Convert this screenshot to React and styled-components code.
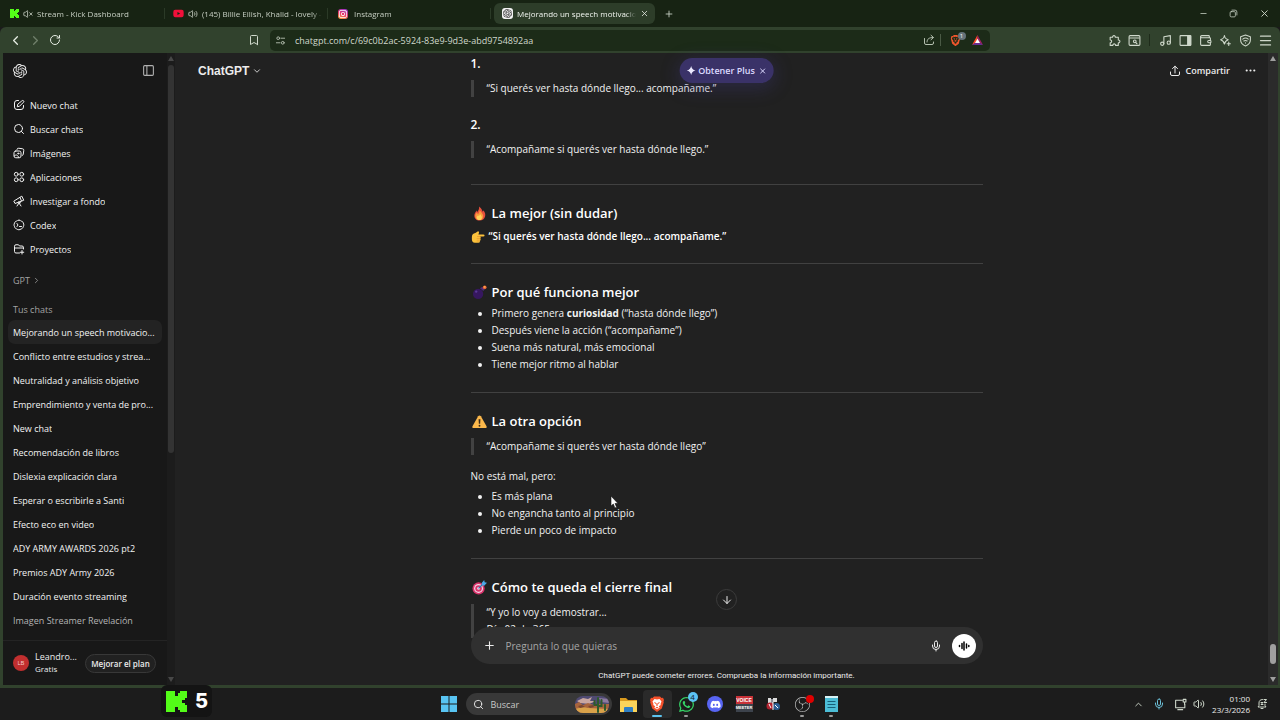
import React from "react";
import styled, { createGlobalStyle, css } from "styled-components";
import {
  ArrowDown, Bookmark, ChevronDown, ChevronLeft, ChevronRight, ChevronUp,
  Ellipsis, Menu, Mic, Minus, Music, PanelLeft, Plus, RotateCw,
  Search, Volume2, VolumeX, Wallet, X,
} from "lucide-react";
import { SiOpenai, SiBrave, SiObsstudio, SiInstagram } from "react-icons/si";
import { FaDiscord, FaWhatsapp, FaYoutube } from "react-icons/fa";

const Global = createGlobalStyle`
  * { box-sizing: border-box; }
  body { margin: 0; background: #1b1b1b; font-family: "Open Sans", "Noto Sans", sans-serif; color: #ececec; }
  button, input { font: inherit; color: inherit; background: none; border: 0; padding: 0; margin: 0; }
  button { display: flex; align-items: center; justify-content: center; white-space: nowrap; }
  input { outline: 0; }
  a { color: inherit; text-decoration: none; }
  ul, h2, h3, p, blockquote { margin: 0; padding: 0; }
  svg { flex: none; display: block; }
`;

const Shell = styled.div`
  position: relative;
  display: flex;
  flex-direction: column;
  height: 100vh;
  overflow: hidden;
`;

/* Browser chrome */
const TabStrip = styled.header`
  display: flex;
  align-items: center;
  height: 27px;
  flex: none;
  padding-left: 2px;
  background: #172313;
`;
const Tab = styled.a`
  display: flex;
  align-items: center;
  gap: 4px;
  width: ${(p) => (p.$active ? 161 : 163)}px;
  height: 21px;
  padding: 0 6px 0 8px;
  font-size: 8px;
  color: #c6cec2;
  ${(p) =>
    p.$active
      ? css`
          margin-left: 3px;
          border-radius: 6px;
          background: #2d3d29;
          color: #f0f4ee;
        `
      : css`
          background: linear-gradient(#2b3a27, #2b3a27) right center / 1px 11px no-repeat;
        `}
`;
const TabTitle = styled.span`
  flex: 1;
  overflow: hidden;
  white-space: nowrap;
  mask-image: linear-gradient(90deg, #000 calc(100% - 10px), transparent);
`;
const IconButton = styled.button`
  width: ${(p) => p.$w || 20}px;
  height: ${(p) => p.$h || 20}px;
  color: ${(p) => p.$color || "#cfd8cb"};
`;
const TabClose = styled(IconButton)`
  width: 9px;
  color: #f0f4ee;
`;
const WindowControls = styled.div`
  display: flex;
  margin-left: auto;
`;
const Toolbar = styled.div`
  display: grid;
  grid-template-columns: 270px minmax(0, 1fr) 290px;
  align-items: center;
  height: 26px;
  flex: none;
  border-radius: 6px 6px 0 0;
  background: #31422d;
`;
const ToolGroup = styled.div`
  display: flex;
  align-items: center;
  padding: 0 5px;
  ${(p) => p.$end && "justify-content: flex-end;"}
`;
const Spacer = styled.span`
  flex: 1;
`;
const Divider = styled.span`
  width: 1px;
  height: 12px;
  margin: 0 ${(p) => p.$m || 0}px;
  background: ${(p) => p.$color || "#1e2b1a"};
`;
const AddressBar = styled.form`
  display: flex;
  align-items: center;
  height: 21px;
  padding: 0 0 0 5px;
  border-radius: 5px;
  background: #1c2b18;
  color: #b5c0b0;
`;
const AddressInput = styled.input`
  flex: 1;
  min-width: 0;
  margin-left: 9px;
  font-size: 9px;
  color: #d0d8cc;
`;
const BadgeWrap = styled.span`
  position: relative;
  display: flex;
`;
const Badge = styled.span`
  position: absolute;
  top: ${(p) => p.$top || -3}px;
  right: ${(p) => p.$right || -5}px;
  width: ${(p) => p.$size || 8}px;
  height: ${(p) => p.$size || 8}px;
  border-radius: 50%;
  background: ${(p) => p.$bg || "#66737a"};
  color: ${(p) => p.$fg || "#fff"};
  font-size: ${(p) => (p.$size ? 8 : 6)}px;
  line-height: ${(p) => p.$size || 8}px;
  text-align: center;
`;

/* Page frame */
const Frame = styled.div`
  display: flex;
  flex: 1;
  min-height: 0;
  padding: 0 2px 3px 3px;
  background: #31422d;
`;
const Sidebar = styled.aside`
  display: flex;
  width: 172px;
  flex: none;
  background: #181818;
`;
const SideBody = styled.div`
  display: flex;
  flex-direction: column;
  flex: 1;
  min-width: 0;
`;
const SideTop = styled.div`
  display: flex;
  align-items: center;
  justify-content: space-between;
  height: 35px;
  flex: none;
  padding: 0 11px 0 7px;
`;
const Nav = styled.nav`
  display: flex;
  flex-direction: column;
  padding: ${(p) => p.$top || 0}px 5px 0;
`;
const NavItem = styled.a`
  display: flex;
  align-items: center;
  gap: 5px;
  height: 24px;
  padding: 0 5px;
  border-radius: 7px;
  font-size: 9px;
  color: ${(p) => (p.$faded ? "#b4b4b4" : "#f2f2f2")};
  background: ${(p) => (p.$active ? "#232323" : "transparent")};
  span { overflow: hidden; white-space: nowrap; text-overflow: ellipsis; }
`;
const SectionLabel = styled.h2`
  display: flex;
  align-items: center;
  gap: 2px;
  height: 16px;
  margin: ${(p) => p.$top}px 10px 0;
  font-size: 9px;
  font-weight: 400;
  color: #a3a3a3;
`;
const Account = styled.footer`
  display: flex;
  align-items: center;
  gap: 6px;
  height: 45px;
  flex: none;
  margin-top: auto;
  padding: 0 11px 0 10px;
  border-top: 1px solid #242424;
`;
const Avatar = styled.span`
  width: 16px;
  height: 16px;
  border-radius: 50%;
  background: #c12f2f;
  color: #f3cfcf;
  font-size: 6px;
  line-height: 16px;
  text-align: center;
`;
const AccountName = styled.div`
  flex: 1;
  font-size: 9px;
  line-height: 12px;
  small { display: block; font-size: 8px; }
`;
const PlanButton = styled.button`
  width: 71px;
  height: 19px;
  border: 1px solid #383838;
  border-radius: 10px;
  background: #212121;
  font-size: 8px;
  font-weight: 600;
`;
const Scrollbar = styled.div`
  display: flex;
  flex-direction: column;
  align-items: center;
  width: ${(p) => p.$w}px;
  flex: none;
  padding: 3px 0;
  background: ${(p) => p.$track};
  color: ${(p) => p.$arrow};
`;
const Thumb = styled.span`
  width: 6px;
  height: ${(p) => p.$h};
  margin: ${(p) => p.$m};
  border-radius: 3px;
  background: ${(p) => p.$color};
`;

/* Conversation */
const Main = styled.main`
  position: relative;
  display: flex;
  flex: 1;
  min-width: 0;
  background: #212121;
`;
const TopBar = styled.div`
  position: absolute;
  inset: 0 18px auto 23px;
  display: flex;
  align-items: center;
  justify-content: space-between;
  height: 35px;
`;
const ModelButton = styled.button`
  gap: 3px;
  font-family: "Liberation Sans", sans-serif;
  font-size: 12px;
  font-weight: 700;
`;
const ShareButton = styled.button`
  gap: 5px;
  font-size: 9px;
  font-weight: 600;
`;
const TopActions = styled.div`
  display: flex;
  gap: 10px;
`;
const PlusPill = styled.div`
  position: absolute;
  top: 5px;
  left: 50%;
  transform: translateX(-50%);
  display: flex;
  align-items: center;
  height: 25px;
  gap: 4px;
  padding: 0 7px;
  border-radius: 13px;
  background: #3a3268;
  box-shadow: 0 4px 18px 2px rgba(70, 60, 150, 0.28);
  color: #dcd9ff;
  font-size: 9px;
  font-weight: 600;
  button { gap: 3px; }
`;
const Scroller = styled.div`
  flex: 1;
  min-width: 0;
  overflow: hidden;
  display: flex;
  justify-content: center;
  padding-left: 10px;
`;
const Thread = styled.article`
  width: 512px;
  max-width: 100%;
  font-size: 10px;
  line-height: 17px;
  color: #f2f2f2;
`;
const Heading = styled.h3`
  display: flex;
  align-items: center;
  gap: 5px;
  height: 20px;
  font-size: ${(p) => (p.$small ? 12 : 13)}px;
  font-weight: 600;
  color: #fff;
  svg { margin-left: 1px; }
`;
const Rule = styled.hr`
  height: 1px;
  margin: 19px 0 18px;
  border: 0;
  background: #414141;
`;
const Quote = styled.blockquote`
  margin: 7px 0 13px;
  padding-left: 13px;
  border-left: 3px solid #424242;
  & + ${Heading} { margin-top: 17px; }
  & + ${Rule} { margin-top: 26px; }
`;
const Para = styled.p`
  display: flex;
  align-items: center;
  gap: 4px;
  strong { font-weight: 600; color: #fff; }
  ${Heading} + & { margin-top: 5px; }
  & + ${Rule} { margin-top: 18px; }
`;
const List = styled.ul`
  padding-left: 21px;
  margin-top: 3px;
  strong { font-weight: 700; }
`;
const Dock = styled.div`
  position: absolute;
  inset: auto 0 0 0;
  display: flex;
  flex-direction: column;
  align-items: center;
  height: 58px;
  background: linear-gradient(transparent 18px, #212121 18px);
  margin-right: 10px;
  padding-left: 10px;
`;
const JumpButton = styled.button`
  position: absolute;
  top: -38px;
  width: 21px;
  height: 21px;
  border: 1px solid #3c3c3c;
  border-radius: 50%;
  background: #212121;
`;
const Composer = styled.form`
  display: flex;
  align-items: center;
  width: 512px;
  max-width: 100%;
  height: 37px;
  padding: 0 7px 0 12px;
  border-radius: 19px;
  background: #303030;
`;
const Prompt = styled.input`
  flex: 1;
  min-width: 0;
  margin-left: 10px;
  font-size: 10px;
  &::placeholder { color: #a5a5a5; opacity: 1; }
`;
const VoiceButton = styled.button`
  width: 24px;
  height: 24px;
  margin-left: 9px;
  border-radius: 50%;
  background: #fff;
`;
const Disclaimer = styled.p`
  height: 20px;
  font-family: Roboto, "Open Sans", sans-serif;
  font-size: 8px;
  line-height: 24px;
  white-space: nowrap;
`;
const Pointer = styled.svg`
  position: absolute;
  top: 495px;
  left: 610px;
`;

/* Desktop taskbar */
const Taskbar = styled.footer`
  display: grid;
  grid-template-columns: 1fr auto 1fr;
  align-items: center;
  height: 32px;
  flex: none;
  background: #1c1c1c;
`;
const Apps = styled.div`
  grid-column: 2;
  display: flex;
  align-items: center;
`;
const TaskButton = styled.button`
  position: relative;
  width: 29px;
  height: 28px;
  border-radius: 4px;
  background: ${(p) => (p.$active ? "#2a2a2a" : "transparent")};
  &::after {
    content: "";
    display: ${(p) => (p.$active || p.$running ? "block" : "none")};
    position: absolute;
    bottom: 1px;
    width: ${(p) => (p.$active ? 10 : 4)}px;
    height: 2px;
    border-radius: 1px;
    background: ${(p) => (p.$active ? "#5cc3ee" : "#9a9a9a")};
  }
`;
const SearchBox = styled.label`
  display: flex;
  align-items: center;
  gap: 7px;
  width: 146px;
  height: 22px;
  margin: 0 2px;
  padding: 0 3px 0 7px;
  border-radius: 11px;
  background: #383838;
  input { flex: 1; min-width: 0; font-size: 9px; }
  input::placeholder { color: #c8c8c8; opacity: 1; }
`;
const Tray = styled.div`
  display: flex;
  align-items: center;
  justify-content: flex-end;
  padding-right: 12px;
  gap: 6px;
`;
const Clock = styled.time`
  margin-left: 1px;
  font-size: 8px;
  line-height: 11px;
  text-align: right;
`;
const Counter = styled.div`
  position: absolute;
  left: 161px;
  bottom: 3px;
  display: flex;
  align-items: center;
  gap: 8px;
  height: 32px;
  padding: 0 4px 0 5px;
  border-radius: 6px;
  background: #141414;
  font-family: "Inter", sans-serif;
  font-size: 20px;
  font-weight: 800;
  color: #fff;
`;
const Favicon = styled.span`
  display: flex;
  padding: 1px;
  border-radius: 3px;
  background: #f4f4f4;
  color: #222;
`;
const InstaMark = styled.span`
  display: flex;
  padding: 1px;
  margin: 0 2px;
  border-radius: 3px;
  background: linear-gradient(20deg, #fdb43c, #e8356b 50%, #8a34d8);
  color: #fff;
`;
const DiscordDisc = styled.span`
  display: flex;
  align-items: center;
  justify-content: center;
  width: 16px;
  height: 16px;
  border-radius: 50%;
  background: #5865f2;
  color: #fff;
`;
const VoiceMeter = styled.span`
  display: flex;
  flex-direction: column;
  width: 17px;
  font: 700 5px/8px "Liberation Sans", sans-serif;
  color: #fff;
  text-align: center;
  b { background: #c93238; }
  i { background: #3d434c; font-style: normal; font-size: 4px; }
`;

/* Drawings */
const Svg = ({ s = 12, children, sw = 2 }) => (
  <svg width={s} height={s} viewBox="0 0 24 24" fill="none" stroke="currentColor" strokeWidth={sw} strokeLinecap="round" strokeLinejoin="round" aria-hidden="true">
    {children}
  </svg>
);
const KickMark = ({ s }) => (
  <svg width={s} height={s} viewBox="0 0 9 9" aria-hidden="true" shapeRendering="crispEdges">
    <path fill="#53fc18" d="M0 0h4v2h1V1h1V0h3v3H8v1H7v1h1v1h1v3H6V8H5V7H4v2H0z" />
  </svg>
);
const Images = () => (
  <Svg>
    <path d="M8 5.500V5a3 3 0 0 1 3.500-2.500l7.500 1A3 3 0 0 1 21.500 7l-1 7.500a3 3 0 0 1-2 2.500" />
    <rect x="2" y="8" width="14" height="13.500" rx="3.500" />
    <circle cx="10.500" cy="13" r="1.200" />
    <path d="M2.500 18c4-4 7-2 9 3" />
  </Svg>
);
const Grid = () => (
  <Svg>
    <circle cx="6.500" cy="6.500" r="3.800" /><circle cx="17.500" cy="6.500" r="3.800" />
    <circle cx="6.500" cy="17.500" r="3.800" /><circle cx="17.500" cy="17.500" r="3.800" />
  </Svg>
);
const Telescope = () => (
  <Svg>
    <path d="M2 13l2 4L21.500 10.500 18 3zM14 5l3 7" />
    <circle cx="12" cy="15.500" r="2" />
    <path d="M11 17.500l-3 4.500M13 17.500l3 4.500" />
  </Svg>
);
const Codex = () => (
  <Svg>
    <path d="M12 2.500c2 0 3 .5 4.500 1.800C19 4.500 20 6 20.500 8c1.500 2.500 1.500 5 0 7.500-.5 2.500-2 3.800-4.500 4.500-2.500 2-6 2-8.500 0-2.500-.8-4-2.300-4.300-4.500-1.500-2.500-1.500-5 0-7.500C4 5.500 5 4.500 7.500 4 9 3 10 2.500 12 2.500z" />
    <path d="M8 9l2 3-2 3M13 15h4" />
  </Svg>
);
const Compose = () => (
  <Svg>
    <path d="M11 3H8a5 5 0 0 0-5 5v8a5 5 0 0 0 5 5h8a5 5 0 0 0 5-5v-3" />
    <path d="M18 3.500a2 2 0 0 1 3 3l-8 8-4.500 1 1-4.500z" />
  </Svg>
);
const ProjectFolder = () => (
  <Svg>
    <path d="M21 12V9a3 3 0 0 0-3-3h-5l-2-2.500H6a3 3 0 0 0-3 3V17a3 3 0 0 0 3 3h7M3 10h18M18 15v7M14.500 18.500h7" />
  </Svg>
);
const Tune = () => (
  <Svg s={11}>
    <circle cx="7" cy="7" r="3" /><path d="M13 7h8M3 17h8" /><circle cx="17" cy="17" r="3" />
  </Svg>
);
const ShareOut = () => (
  <Svg>
    <path d="M3 9v9a3 3 0 0 0 3 3h12a3 3 0 0 0 3-3v-2M8 16c0-6 4-9 12-9M16 2.500L21 7l-5 4.500" />
  </Svg>
);
const PuzzlePiece = () => (
  <Svg s={13}>
    <path d="M4 6h4.500c-.8-4 5.800-4 5 0H19v5c4-.8 4 6 0 5.200V21h-5c.6-3.600-5.600-3.600-5 0H4v-5c3.600.6 3.600-5.600 0-5z" />
  </Svg>
);
const Bat = () => (
  <svg width="11" height="10" viewBox="0 0 22 20" aria-hidden="true">
    <path fill="#ff4724" d="M11 0L0 20l7-4 4-8z" />
    <path fill="#9e1f63" d="M11 0l11 20-7-4-4-8z" />
    <path fill="#662d91" d="M0 20h22l-7-5H7z" />
    <path fill="#fff" d="M11 7l5 9H6z" />
  </svg>
);
const TabSearch = () => (
  <Svg s={13}>
    <rect x="2" y="3" width="20" height="18" rx="2" /><path d="M3 7.500h18M14.500 16l2 2" /><circle cx="12.500" cy="13.500" r="2.500" />
  </Svg>
);
const SidePanel = () => (
  <Svg s={13}>
    <rect x="2" y="3" width="20" height="18" rx="1" /><path fill="currentColor" d="M16 4h5v16h-5z" />
  </Svg>
);
const LeoStar = () => (
  <Svg s={13}>
    <path d="M10 3c1 5 2 6 7 7.500-5 1.500-6 3-7 8-1-5-2-6.500-7-8C8 9 9 8 10 3z" />
    <path d="M18 15v6M15 18h6" />
  </Svg>
);
const VpnShield = () => (
  <Svg s={13}>
    <path d="M12 2l9 3v6c0 6-4 9-9 11-5-2-9-5-9-11V5z" /><path d="M7 9.500c3-2.500 7-2.500 10 0M9 13c2-1.500 4-1.500 6 0M12 16v.5" />
  </Svg>
);
const Restore = () => (
  <Svg s={9}>
    <rect x="3" y="7" width="14" height="14" rx="3" /><path d="M8 3h8a5 5 0 0 1 5 5v8" />
  </Svg>
);
const ExportUp = () => (
  <Svg s={12}>
    <path d="M12 16V2.500M7 7l5-4.500L17 7M3 14v4a3 3 0 0 0 3 3h12a3 3 0 0 0 3-3v-4" />
  </Svg>
);
const Spark = () => (
  <svg width="9" height="9" viewBox="0 0 10 10" aria-hidden="true"><path fill="#eceaff" d="M5 0C5.700 3 7 4.300 10 5 7 5.700 5.700 7 5 10 4.300 7 3 5.700 0 5 3 4.300 4.300 3 5 0z" /></svg>
);
const Arrow = ({ down }) => (
  <svg width="6" height="5" viewBox="0 0 6 5" aria-hidden="true"><path fill="currentColor" d={down ? "M0 0h6L3 5z" : "M0 5h6L3 0z"} /></svg>
);
const Fire = () => (
  <svg width="15" height="15" viewBox="0 0 32 32" aria-hidden="true">
    <path fill="#e8503c" d="M15 1c6 4 6 8 8 11 1-1 1-2 1-3 4 4 5 9 4 13-1 6-6 9-12 9S5 27 5 20c0-5 3-7 5-11 0 2 0 3 1 4 3-4 5-7 4-12z" />
    <path fill="#fb9b3c" d="M16 9c4 4 7 7 8 12 0 6-3 9-8 9s-9-3-9-9c0-3 2-5 3-7 1 2 2 3 3 3 2-2 3-5 3-8z" />
    <path fill="#ffd25a" d="M17 17c3 3 4 5 4 8s-2 5-5 5-6-2-6-5 2-4 3-5c1 1 2 1 2 1 1-1 2-2 2-4z" />
  </svg>
);
const PointRight = () => (
  <svg width="14" height="14" viewBox="0 0 32 32" aria-hidden="true">
    <path fill="#fcc23c" d="M2 16c0-5 3-8 8-9l6-4c2 0 3 2 2 4l-1 3h11c4 0 4 5 0 5h-8c3 1 3 4 1 5 2 1 1 4-1 5 1 2 0 4-3 4H9c-5 0-7-4-7-8z" />
    <path fill="none" stroke="#e08a2a" strokeWidth="1.500" d="M14 15h8M13 20h8M13 25h7" />
  </svg>
);
const Bomb = () => (
  <svg width="15" height="15" viewBox="0 0 32 32" aria-hidden="true">
    <circle cx="13" cy="19" r="11" fill="#36175f" />
    <path fill="#4b2a80" d="M17 7l7 6 3-4-6-5z" />
    <path fill="none" stroke="#8a5a40" strokeWidth="2" d="M23 7l3-3" />
    <circle cx="27" cy="5" r="4" fill="#e5623a" /><circle cx="27" cy="4" r="2" fill="#ffb04a" />
    <circle cx="9" cy="14" r="2.500" fill="#5a3a98" />
  </svg>
);
const Warning = () => (
  <svg width="15" height="15" viewBox="0 0 32 32" aria-hidden="true">
    <path fill="#fbb84b" d="M16 3c1 0 2 1 3 2l12 21c1 2 0 4-2 4H3c-2 0-3-2-2-4L13 5c1-1 2-2 3-2z" />
    <path fill="#3a2a18" d="M14 11h4l-.6 10h-2.800z" /><circle cx="16" cy="25" r="2" fill="#3a2a18" />
  </svg>
);
const Target = () => (
  <svg width="15" height="15" viewBox="0 0 32 32" aria-hidden="true">
    <circle cx="14" cy="18" r="13" fill="#d8326a" /><circle cx="14" cy="18" r="9.500" fill="#f3d9e6" />
    <circle cx="14" cy="18" r="7" fill="#d8326a" /><circle cx="14" cy="18" r="3" fill="#f3d9e6" />
    <path stroke="#2a78b8" strokeWidth="2.500" d="M14 18L25 7" /><path fill="#4aa8e8" d="M21 6l5-6 1 5 5 1-6 6-5-1z" />
  </svg>
);
const Wave = () => (
  <svg width="12" height="12" viewBox="0 0 12 12" stroke="#000" strokeWidth="1.500" strokeLinecap="round" aria-hidden="true">
    <path d="M1.500 5.500v1M4 3.500v5M6 2v8M8.500 4v4M10.800 5.500v1" />
  </svg>
);
const WindowsLogo = () => (
  <svg width="16" height="16" viewBox="0 0 16 16" aria-hidden="true"><path fill="#58c4f2" d="M0 0h7.500v7.500H0zM8.500 0H16v7.500H8.500zM0 8.500h7.500V16H0zM8.500 8.500H16V16H8.500z" /></svg>
);
const Desert = () => (
  <svg width="34" height="17" viewBox="0 0 34 17" aria-hidden="true">
    <defs><clipPath id="pill"><rect width="34" height="17" rx="8" /></clipPath></defs>
    <g clipPath="url(#pill)">
      <path fill="#4f4a72" d="M0 0h34v17H0z" />
      <path fill="#c9a6a0" d="M2 5l6-3 5 1 4-2-2 4 6 0-7 3-9-1z" /><path fill="#8d7aa0" d="M24 2l10 1v4l-8-1z" />
      <path fill="#a8643c" d="M0 8l4-2 4 3 5-2 6 2 4-1 11 0v9H0z" /><path fill="#d9a24a" d="M0 13l8-2 5 1 21 1v4H0z" />
      <path fill="#7a4630" d="M3 10l4-1 3 2-5 1zM13 10l5-1 1 2-4 1z" />
      <path stroke="#2f5a2c" strokeWidth="2" fill="none" strokeLinecap="round" d="M23 2v14M19.500 5v4H23M26.500 4v6H23M30 9v5" />
    </g>
  </svg>
);
const Folder = () => (
  <svg width="17" height="15" viewBox="0 0 17 15" aria-hidden="true">
    <path fill="#d99a1e" d="M0 1h6l2 2h9v4H0z" /><path fill="#fbd45a" d="M0 4h17v11H0z" /><path fill="#2f7fc4" d="M4 15v-4q0-1 1-1h7q1 0 1 1v4z" />
  </svg>
);
const BraveLion = () => (
  <svg width="14" height="16" viewBox="0 0 28 32" aria-hidden="true">
    <path fill="#f4502a" d="M8 1h12l3 3 3-.5L28 8l-1 3 .5 2-4 12-9.500 7-9.500-7L.5 13 1 11 0 8l2-4.500L5 4z" />
    <path fill="#fff" d="M9 6l5 1 5-1 4 5-2 5 .5 2-4 2.500 2 2.500-5.500 4-5.500-4 2-2.500L6.500 18l.5-2-2-5z" />
    <path fill="#f4502a" d="M8 12l4 1.500-1 3zM20 12l-4 1.500 1 3zM13 14h2l.5 5-1.500 1-1.500-1zM11 23l3-1.500 3 1.500-3 2z" />
  </svg>
);
const Mixer = () => (
  <svg width="14" height="13" viewBox="0 0 14 13" aria-hidden="true">
    <path fill="#dcdcdc" d="M2 0h3v5H2zM7 0h4v4H7z" /><path fill="#8a8f98" d="M5 1h2v6H5z" />
    <circle cx="4" cy="8" r="3.500" fill="#b02330" /><circle cx="10.500" cy="8.500" r="3.500" fill="#2b5f94" />
    <path stroke="#fff" d="M3 6l2 4M9 7l3 3M7 4v8" />
  </svg>
);
const Notepad = () => (
  <svg width="13" height="16" viewBox="0 0 13 16" aria-hidden="true">
    <path fill="#4cbdd6" d="M0 1h13v15H0z" /><path fill="#d8f2f6" d="M0 0h13v2H0z" />
    <path stroke="#17607a" strokeWidth="1.200" d="M2.500 5.500h8M2.500 8.500h8M2.500 11.500h8" />
  </svg>
);
const NetScreen = () => (
  <Svg s={13}><path d="M15 4H3v14h17v-7M7 21.500h9M17 2.500h5v5h-5zM19.500 8v4" /></Svg>
);
const BellZ = () => (
  <Svg s={12}><path d="M13 3C8 3 6 6 6 10v5l-2 3h16l-2-3v-3M10 21h4M16 3h5l-5 6h5M10 9h4l-4 4h4" /></Svg>
);

const NAV = [
  [Compose, "Nuevo chat"], [() => <Search size={12} />, "Buscar chats"], [Images, "Imágenes"], [Grid, "Aplicaciones"],
  [Telescope, "Investigar a fondo"], [Codex, "Codex"], [ProjectFolder, "Proyectos"],
];
const CHATS = [
  "Mejorando un speech motivacio...", "Conflicto entre estudios y strea...", "Neutralidad y análisis objetivo",
  "Emprendimiento y venta de pro...", "New chat", "Recomendación de libros", "Dislexia explicación clara",
  "Esperar o escribirle a Santi", "Efecto eco en video", "ADY ARMY AWARDS 2026 pt2", "Premios ADY Army 2026",
  "Duración evento streaming", "Imagen Streamer Revelación",
];

export default function App() {
  return (
    <Shell>
      <Global />
      <TabStrip>
        <Tab href="#kick"><KickMark s={9} /><VolumeX size={10} /><TabTitle>Stream - Kick Dashboard</TabTitle></Tab>
        <Tab href="#youtube"><FaYoutube size={11} color="#f0103a" /><Volume2 size={10} /><TabTitle>(145) Billie Eilish, Khalid - lovely -</TabTitle></Tab>
        <Tab href="#instagram"><InstaMark><SiInstagram size={8} /></InstaMark><TabTitle>Instagram</TabTitle></Tab>
        <Tab href="#chatgpt" $active>
          <Favicon><SiOpenai size={9} /></Favicon>
          <TabTitle>Mejorando un speech motivacio</TabTitle>
          <TabClose aria-label="Cerrar pestaña"><X size={9} /></TabClose>
        </Tab>
        <IconButton $w={28} aria-label="Nueva pestaña"><Plus size={10} /></IconButton>
        <WindowControls>
          <IconButton $w={30} aria-label="Minimizar"><Minus size={9} /></IconButton>
          <IconButton $w={30} aria-label="Restaurar"><Restore /></IconButton>
          <IconButton $w={32} aria-label="Cerrar"><X size={11} /></IconButton>
        </WindowControls>
      </TabStrip>

      <Toolbar>
        <ToolGroup>
          <IconButton aria-label="Atrás" $color="#e8eee5"><ChevronLeft size={15} /></IconButton>
          <IconButton aria-label="Adelante" $color="#71806c"><ChevronRight size={15} /></IconButton>
          <IconButton aria-label="Recargar" $color="#e8eee5"><RotateCw size={12} /></IconButton>
          <Spacer />
          <IconButton aria-label="Guardar marcador" $w={22}><Bookmark size={12} /></IconButton>
        </ToolGroup>
        <AddressBar>
          <Tune />
          <AddressInput aria-label="Dirección" defaultValue="chatgpt.com/c/69c0b2ac-5924-83e9-9d3e-abd9754892aa" />
          <ShareOut />
          <Divider $m={5} $color="#4a5a45" />
          <IconButton type="button" $w={18} aria-label="Brave Shields"><BadgeWrap><SiBrave size={11} color="#f0562c" /><Badge>1</Badge></BadgeWrap></IconButton>
          <IconButton type="button" $w={26} aria-label="Brave Rewards"><Bat /></IconButton>
        </AddressBar>
        <ToolGroup $end>
          <IconButton aria-label="Extensiones"><PuzzlePiece /></IconButton>
          <IconButton aria-label="Buscar pestañas"><TabSearch /></IconButton>
          <Divider $m={5} />
          <IconButton aria-label="Multimedia"><Music size={13} /></IconButton>
          <IconButton aria-label="Panel lateral"><SidePanel /></IconButton>
          <IconButton aria-label="Cartera"><Wallet size={13} /></IconButton>
          <IconButton aria-label="Leo"><LeoStar /></IconButton>
          <IconButton aria-label="VPN"><VpnShield /></IconButton>
          <IconButton aria-label="Menú"><Menu size={15} /></IconButton>
        </ToolGroup>
      </Toolbar>

      <Frame>
        <Sidebar>
          <SideBody>
            <SideTop>
              <IconButton aria-label="Inicio" $color="#ececec"><SiOpenai size={14} /></IconButton>
              <IconButton aria-label="Cerrar barra lateral" $w={16} $color="#b0b0b0"><PanelLeft size={13} /></IconButton>
            </SideTop>
            <Nav $top={5}>
              {NAV.map(([Icon, label]) => (
                <NavItem href="#" key={label}><Icon /><span>{label}</span></NavItem>
              ))}
            </Nav>
            <SectionLabel $top={11}>GPT <ChevronRight size={9} /></SectionLabel>
            <SectionLabel $top={13}>Tus chats</SectionLabel>
            <Nav $top={3}>
              {CHATS.map((c, i) => (
                <NavItem href="#" key={c} $active={i === 0} $faded={i === CHATS.length - 1}><span>{c}</span></NavItem>
              ))}
            </Nav>
            <Account>
              <Avatar>LB</Avatar>
              <AccountName>Leandro...<small>Gratis</small></AccountName>
              <PlanButton>Mejorar el plan</PlanButton>
            </Account>
          </SideBody>
          <Scrollbar $w={8} $track="#1c1c1c" $arrow="#484848">
            <Arrow />
            <Thumb $h="62%" $m="4px 0 auto" $color="#333" />
            <Arrow down />
          </Scrollbar>
        </Sidebar>

        <Main>
          <Scroller>
            <Thread>
              <Heading $small>1.</Heading>
              <Quote>“Si querés ver hasta dónde llego... acompañame.”</Quote>
              <Heading $small>2.</Heading>
              <Quote>“Acompañame si querés ver hasta dónde llego.”</Quote>
              <Rule />
              <Heading><Fire />La mejor (sin dudar)</Heading>
              <Para><PointRight /><strong>“Si querés ver hasta dónde llego... acompañame.”</strong></Para>
              <Rule />
              <Heading><Bomb />Por qué funciona mejor</Heading>
              <List>
                <li>Primero genera <strong>curiosidad</strong> (“hasta dónde llego”)</li>
                <li>Después viene la acción (“acompañame”)</li>
                <li>Suena más natural, más emocional</li>
                <li>Tiene mejor ritmo al hablar</li>
              </List>
              <Rule />
              <Heading><Warning />La otra opción</Heading>
              <Quote>“Acompañame si querés ver hasta dónde llego”</Quote>
              <Para>No está mal, pero:</Para>
              <List>
                <li>Es más plana</li>
                <li>No engancha tanto al principio</li>
                <li>Pierde un poco de impacto</li>
              </List>
              <Rule />
              <Heading><Target />Cómo te queda el cierre final</Heading>
              <Quote>“Y yo lo voy a demostrar...<br />Día 02 de 365</Quote>
            </Thread>
          </Scroller>
          <Scrollbar $w={10} $track="#2b2b2b" $arrow="#9f9f9f">
            <Arrow />
            <Thumb $h="20px" $m="auto 0 13px" $color="#9f9f9f" />
            <Arrow down />
          </Scrollbar>
          <TopBar>
            <ModelButton>ChatGPT <ChevronDown size={10} /></ModelButton>
            <TopActions>
              <ShareButton><ExportUp />Compartir</ShareButton>
              <IconButton $w={20} $color="#ececec" aria-label="Más opciones"><Ellipsis size={13} /></IconButton>
            </TopActions>
          </TopBar>
          <PlusPill>
            <button><Spark />Obtener Plus</button>
            <button aria-label="Descartar"><X size={8} strokeWidth={3} /></button>
          </PlusPill>
          <Dock>
            <JumpButton aria-label="Ir al final"><ArrowDown size={12} /></JumpButton>
            <Composer>
              <IconButton type="button" $w={13} $color="#ececec" aria-label="Adjuntar"><Plus size={13} /></IconButton>
              <Prompt aria-label="Mensaje" placeholder="Pregunta lo que quieras" />
              <IconButton type="button" $w={14} $color="#ececec" aria-label="Dictar"><Mic size={12} /></IconButton>
              <VoiceButton type="button" aria-label="Modo de voz"><Wave /></VoiceButton>
            </Composer>
            <Disclaimer>ChatGPT puede cometer errores. Comprueba la información importante.</Disclaimer>
          </Dock>
        </Main>
      </Frame>

      <Taskbar>
        <Apps>
          <TaskButton aria-label="Inicio"><WindowsLogo /></TaskButton>
          <SearchBox><Search size={11} /><input aria-label="Buscar" placeholder="Buscar" /><Desert /></SearchBox>
          <TaskButton aria-label="Explorador"><Folder /></TaskButton>
          <TaskButton aria-label="Brave" $active><BraveLion /></TaskButton>
          <TaskButton aria-label="WhatsApp" $running><BadgeWrap><FaWhatsapp size={17} color="#35d366" /><Badge $size={10} $top={-4} $right={-3} $bg="#5cc3f4" $fg="#10202a">4</Badge></BadgeWrap></TaskButton>
          <TaskButton aria-label="Discord"><DiscordDisc><FaDiscord size={11} /></DiscordDisc></TaskButton>
          <TaskButton aria-label="Voicemeeter"><VoiceMeter><b>VOICE</b><i>MEETER</i></VoiceMeter></TaskButton>
          <TaskButton aria-label="Mezclador"><Mixer /></TaskButton>
          <TaskButton aria-label="OBS" $running><BadgeWrap><SiObsstudio size={15} color="#bdbdbd" /><Badge $top={-2} $right={-4} $bg="#e00000" /></BadgeWrap></TaskButton>
          <TaskButton aria-label="Bloc de notas" $running><Notepad /></TaskButton>
        </Apps>
        <Tray>
          <IconButton $w={14} aria-label="Iconos ocultos"><ChevronUp size={11} /></IconButton>
          <IconButton $w={16} $color="#6cc0d8" aria-label="Micrófono"><Mic size={12} /></IconButton>
          <IconButton $w={14} aria-label="Red"><NetScreen /></IconButton>
          <IconButton $w={12} aria-label="Volumen"><Volume2 size={12} /></IconButton>
          <Clock>01:00<br />23/3/2026</Clock>
          <IconButton $w={12} aria-label="Notificaciones"><BellZ /></IconButton>
        </Tray>
      </Taskbar>

      <Counter><KickMark s={21} />5</Counter>
      <Pointer width="9" height="14" viewBox="0 0 9 14" aria-hidden="true">
        <path fill="#fff" stroke="#111" strokeWidth=".6" d="M1 1v10l2.300-2 1.600 4 1.800-.8-1.700-3.700H8z" />
      </Pointer>
    </Shell>
  );
}
